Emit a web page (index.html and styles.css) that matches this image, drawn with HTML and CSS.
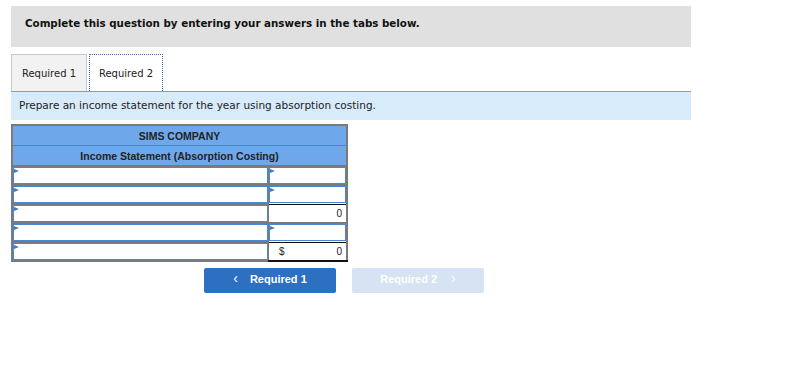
FILE: index.html
```html
<!DOCTYPE html>
<html lang="en">
<head>
    <meta charset="UTF-8">
    <title>Required 2</title>
    <link rel="stylesheet" href="styles.css">
</head>
<body>
    <div class="container">
        <div class="intro">Complete this question by entering your answers in the tabs below.</div>

        <div class="tabs">
            <div class="tab">Required 1</div>
            <div class="tab active">Required 2</div>
        </div>

        <div class="prompt">Prepare an income statement for the year using absorption costing.</div>

        <table class="statement">
            <thead>
                <tr><th colspan="2">SIMS COMPANY</th></tr>
                <tr><th colspan="2">Income Statement (Absorption Costing)</th></tr>
            </thead>
            <tbody>
                <tr>
                    <td class="label"><div class="field pick"></div></td>
                    <td class="amount"><div class="field pick"></div></td>
                </tr>
                <tr>
                    <td class="label"><div class="field pick"></div></td>
                    <td class="amount"><div class="field pick"></div></td>
                </tr>
                <tr>
                    <td class="label"><div class="field pick"></div></td>
                    <td class="amount total"><div class="value">0</div></td>
                </tr>
                <tr>
                    <td class="label"><div class="field pick"></div></td>
                    <td class="amount"><div class="field pick"></div></td>
                </tr>
                <tr>
                    <td class="label"><div class="field pick"></div></td>
                    <td class="amount grand"><div class="value"><span>$</span>0</div></td>
                </tr>
            </tbody>
        </table>

        <div class="nav">
            <button class="prev"><span class="chev">&lsaquo;</span>Required 1</button>
            <button class="next" disabled>Required 2<span class="chev">&rsaquo;</span></button>
        </div>
    </div>
</body>
</html>
```

FILE: styles.css
```css
body {
    margin: 6px 0 0 11px;
    font-family: "DejaVu Sans", Verdana, sans-serif;
    color: #222;
}
.container {
    width: 680px;
}
.intro {
    background-color: #e0e0e0;
    height: 41px;
    padding: 11px 0 0 14px;
    box-sizing: border-box;
    font-size: 10.3px;
    font-weight: bold;
    color: #111;
}
.tabs {
    display: flex;
    gap: 2px;
    margin-top: 7px;
    border-bottom: 1px solid #999;
}
.tab {
    width: 76px;
    height: 37px;
    box-sizing: border-box;
    border: 1px solid #c8c8c8;
    border-bottom: none;
    background-color: #f2f2f2;
    font-size: 10px;
    line-height: 37px;
    text-align: center;
}
.tab.active {
    width: 74px;
    background-color: #fff;
    border: 1px dotted #3a6fb0;
    border-bottom: none;
}
.prompt {
    background-color: #d8ebfa;
    height: 28px;
    padding-left: 8px;
    font-size: 10.5px;
    line-height: 26px;
}
.statement {
    margin-top: 4px;
    width: 337px;
    border-collapse: collapse;
    border: 2px solid #7a7a7a;
    font-family: "Liberation Sans", Arial, sans-serif;
}
.statement th {
    background-color: #6fa8ea;
    height: 19px;
    padding: 0;
    border: 1px solid #7a7a7a;
    font-size: 10.5px;
    color: #222;
}
.statement td {
    padding: 0;
    border: 1px solid #7a7a7a;
    border-width: 2px 1px 0 1px;
    height: 17px;
}
.statement .label {
    width: 255px;
}
.field {
    position: relative;
    height: 15px;
    border: 1px solid #4a88d4;
    background-color: #fff;
}
.pick::before {
    content: "";
    position: absolute;
    top: 1px;
    left: 0;
    border-style: solid;
    border-width: 2px 0 2px 5px;
    border-color: transparent transparent transparent #3a7ad0;
}
.amount.total,
.amount.grand {
    border-top: 1px solid #111;
    border-bottom: 1px solid #111;
}
.amount.grand {
    border-bottom: 2px solid #111;
}
.value {
    height: 17px;
    padding: 0 4px 0 10px;
    font-size: 10px;
    line-height: 17px;
    text-align: right;
    display: flex;
    justify-content: space-between;
}
.amount.total .value {
    justify-content: flex-end;
}
.nav {
    display: flex;
    gap: 16px;
    margin: 6px 0 0 193px;
}
.nav button {
    width: 132px;
    height: 25px;
    padding: 0 0 3px;
    border: none;
    border-radius: 2px;
    font-family: "Liberation Sans", Arial, sans-serif;
    font-size: 11px;
    font-weight: bold;
    line-height: 22px;
    color: #fff;
}
.nav .prev {
    background-color: #2d6fc1;
}
.nav .next {
    background-color: #d5e3f3;
}
.chev {
    font-size: 14px;
    font-weight: normal;
    line-height: 1;
}
.prev .chev {
    margin-right: 12px;
}
.next .chev {
    margin-left: 14px;
}
```
